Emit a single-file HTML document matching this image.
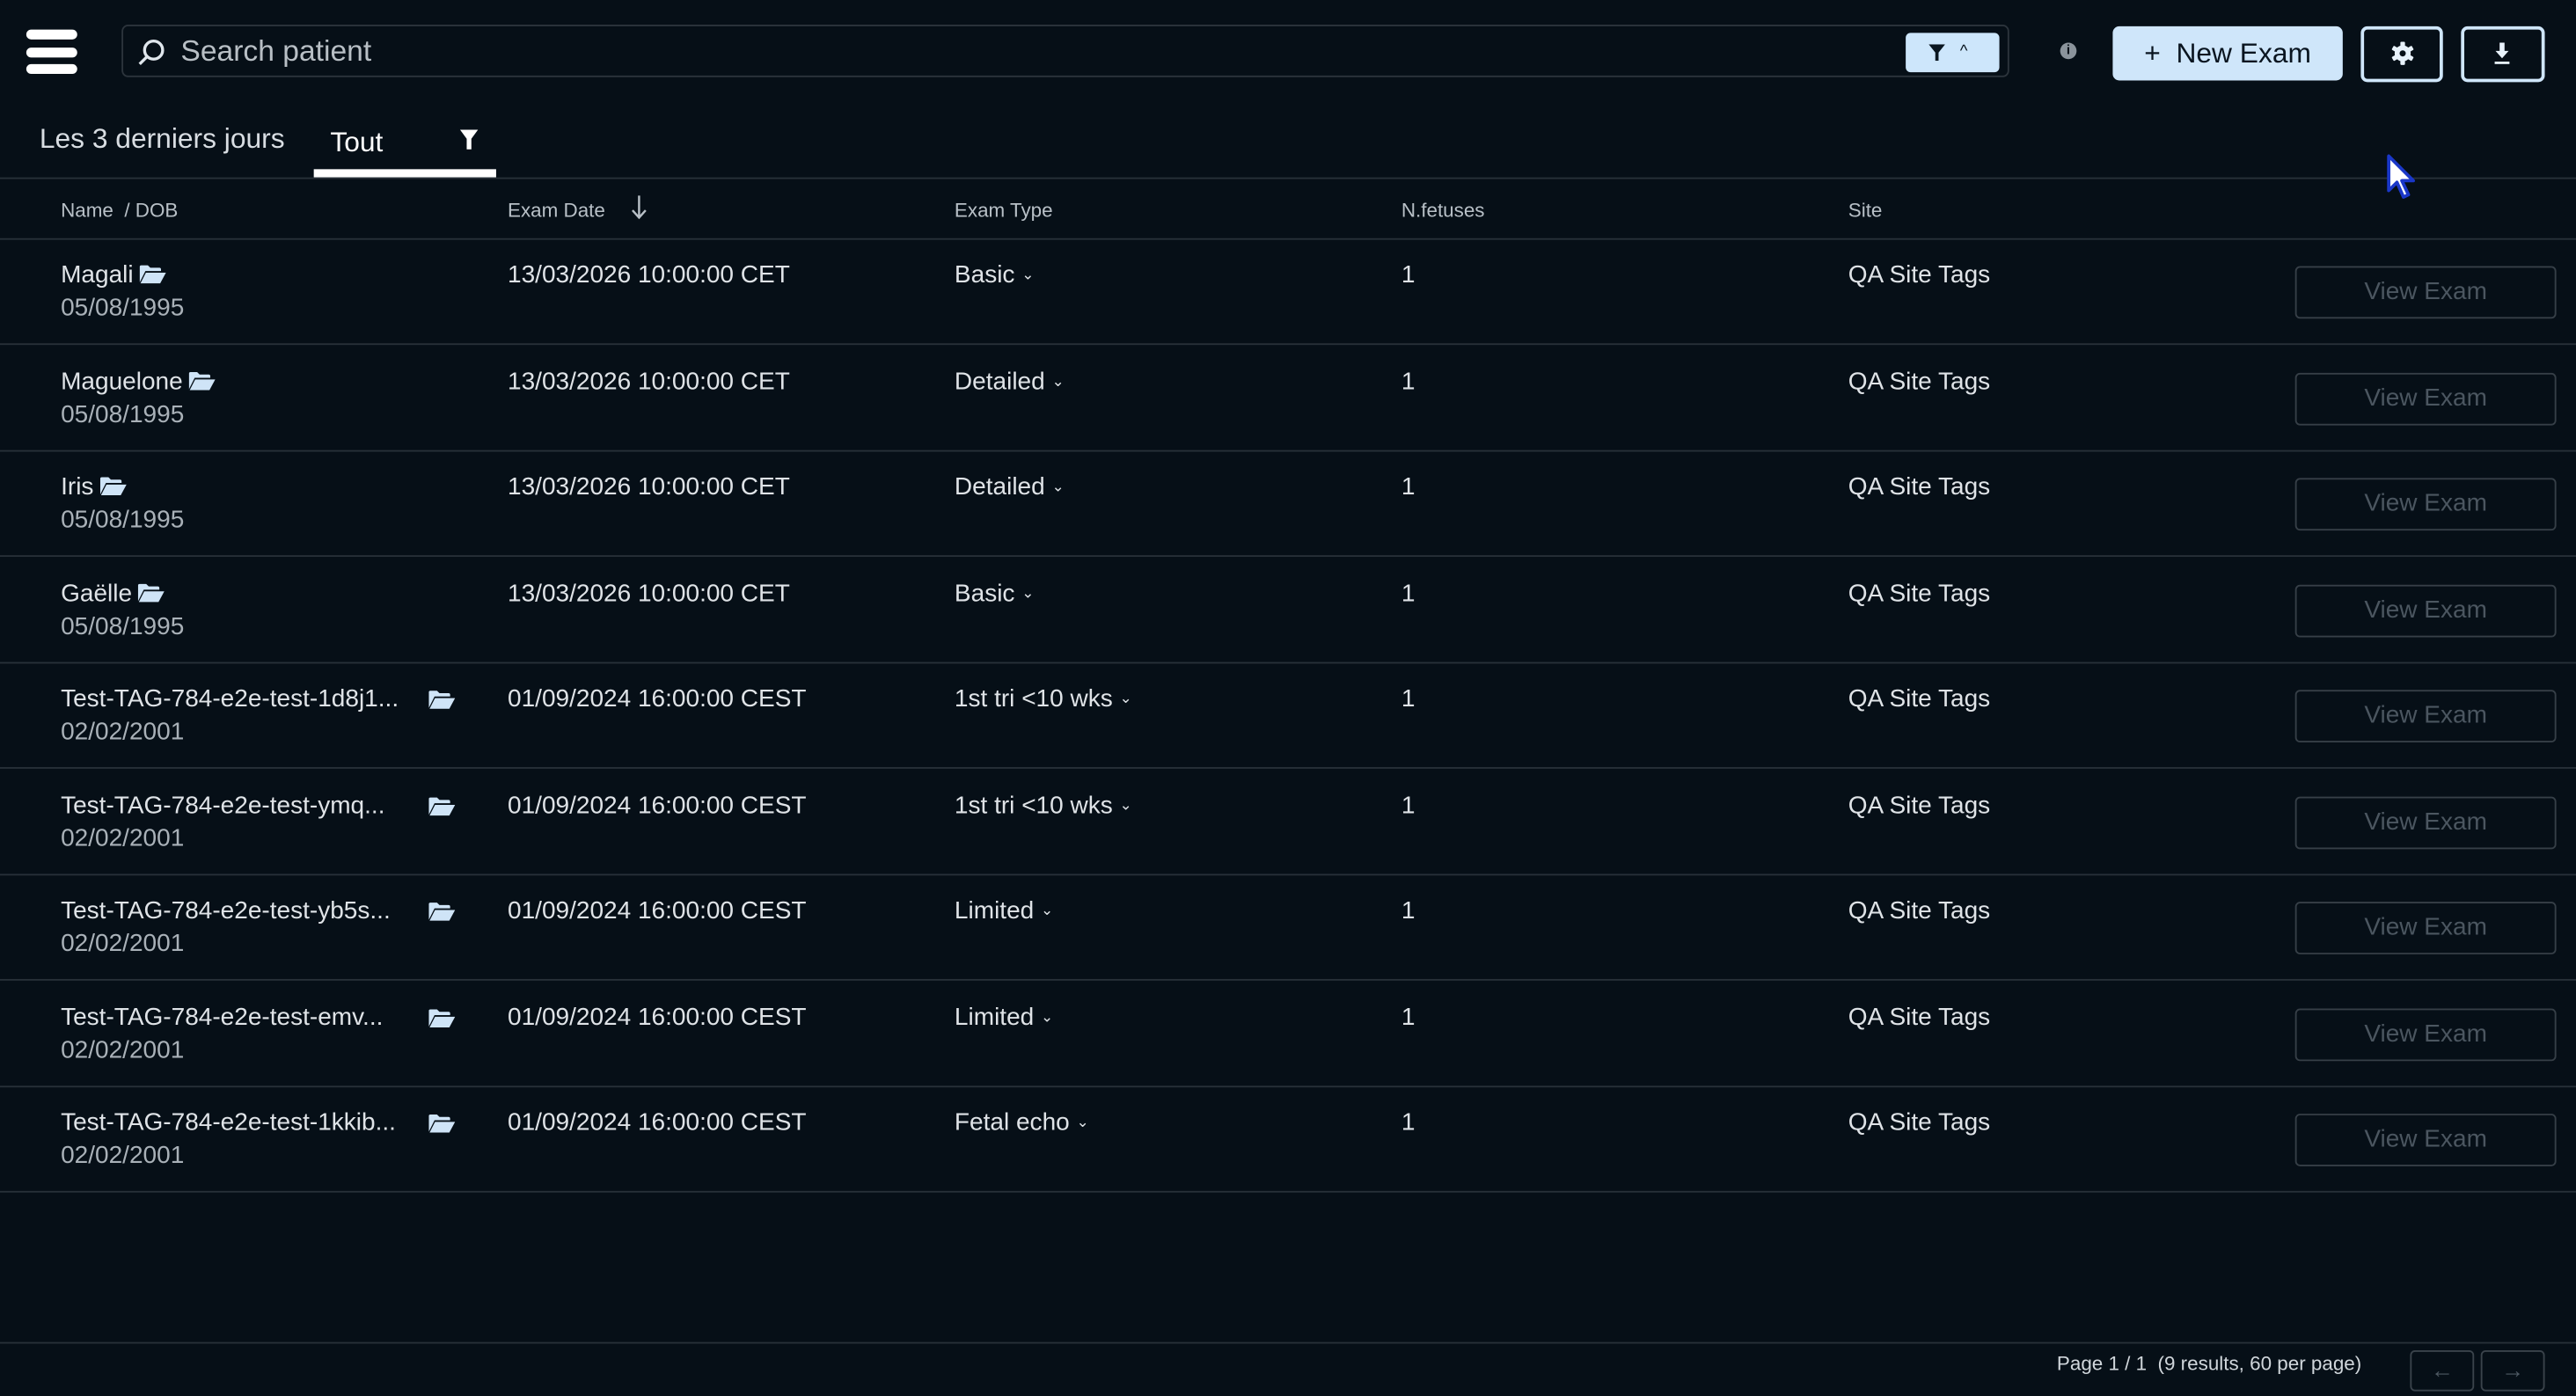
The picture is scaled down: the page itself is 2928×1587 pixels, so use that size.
<!DOCTYPE html>
<html><head><meta charset="utf-8"><style>
html,body{margin:0;padding:0;background:#060f17;overflow:hidden;width:2928px;height:1586px}
#w{position:absolute;left:0;top:0;width:1568px;height:850px;transform:scale(1.86735);transform-origin:0 0;font-family:"Liberation Sans",sans-serif;color:#dde2e6}
.a{position:absolute;white-space:nowrap}
.hl{position:absolute;left:0;width:1568px;height:1px;background:#273038}
.bar{position:absolute;left:16px;width:31px;height:6px;border-radius:3px;background:#fff}
.vb{position:absolute;left:1397px;width:159px;height:32px;border:1.5px solid #363f47;border-radius:3px;box-sizing:border-box;color:#4b5660;font-size:15px;text-align:center;line-height:29px}
.nm{font-size:15px;color:#dfe3e7}
.dob{font-size:15px;color:#a9b1b8}
.c{font-size:15px;color:#dfe3e7}
.fold{display:inline-block;vertical-align:-1px;margin-left:4px}
</style></head><body><div id="w">
<div class="bar" style="top:18px"></div><div class="bar" style="top:29px"></div><div class="bar" style="top:39px"></div>
<div class="a" style="left:74px;top:15px;width:1149px;height:32px;border:1px solid #2c343c;border-radius:4px;box-sizing:border-box"></div>
<svg class="a" style="left:83px;top:23px" width="18" height="18" viewBox="0 0 18 18"><circle cx="10.5" cy="7.5" r="5.5" fill="none" stroke="#dfe6ec" stroke-width="1.8"/><line x1="6.5" y1="11.5" x2="2" y2="16" stroke="#dfe6ec" stroke-width="1.8"/></svg>
<div class="a" style="left:110px;top:21px;font-size:18px;color:#b8bfc5">Search patient</div>
<div class="a" style="left:1160px;top:20px;width:57px;height:24px;background:#cde6fb;border-radius:3px"></div>
<svg class="a" style="left:1174px;top:27px" width="10" height="10" viewBox="0 0 10 10"><path d="M0 0H10L6 5V10H4V5Z" fill="#0a1620"/></svg>
<div class="a" style="left:1193px;top:26px;font-size:10px;color:#0a1620">^</div>
<div class="a" style="left:1254px;top:26px;width:10px;height:10px;border-radius:50%;background:#8a939b;font-size:8px;color:#060f17;text-align:center;line-height:10px;font-weight:bold">i</div>
<div class="a" style="left:1286px;top:16px;width:140px;height:33px;background:#cfe6fa;border-radius:4px;color:#0a1520;font-size:17px;line-height:33px;text-align:center">+&nbsp;&nbsp;New Exam</div>
<div class="a" style="left:1437px;top:16px;width:50px;height:34px;border:2px solid #cfe6fa;border-radius:4px;box-sizing:border-box"></div>
<svg class="a" style="left:1455px;top:25px" width="15" height="15" viewBox="0 0 16 16"><g fill="#e8f2fb"><circle cx="8" cy="8" r="5.2"/><rect x="6.5" y="0.5" width="3" height="15" rx="0.6"/><rect x="6.5" y="0.5" width="3" height="15" rx="0.6" transform="rotate(60 8 8)"/><rect x="6.5" y="0.5" width="3" height="15" rx="0.6" transform="rotate(120 8 8)"/></g><circle cx="8" cy="8" r="2" fill="#060f17"/></svg>
<div class="a" style="left:1498px;top:16px;width:51px;height:34px;border:2px solid #cfe6fa;border-radius:4px;box-sizing:border-box"></div>
<svg class="a" style="left:1517px;top:26px" width="12" height="14" viewBox="0 0 12 14"><path d="M4.5 0H7.5V5H10L6 9.5L2 5H4.5Z" fill="#e8f2fb"/><rect x="1.5" y="11.5" width="9" height="1.5" fill="#e8f2fb"/></svg>
<div class="a" style="left:24px;top:75px;font-size:17px;color:#d8dde2">Les 3 derniers jours</div>
<div class="a" style="left:201px;top:77px;font-size:17px;color:#fff">Tout</div>
<svg class="a" style="left:280px;top:79px" width="11" height="12" viewBox="0 0 10 11"><path d="M0 0H10L6.3 5V11H3.7V5Z" fill="#fff"/></svg>
<div class="a" style="left:191px;top:103px;width:111px;height:5px;background:#fff"></div>
<div class="hl" style="top:108px"></div>
<div class="a" style="left:37px;top:121px;font-size:12px;color:#b8c0c7">Name &nbsp;/ DOB</div>
<div class="a" style="left:309px;top:121px;font-size:12px;color:#b8c0c7">Exam Date</div>
<svg class="a" style="left:384px;top:119px" width="10" height="15" viewBox="0 0 10 15"><path d="M5 0V13M1 9L5 13.5L9 9" fill="none" stroke="#b8c0c7" stroke-width="1.3"/></svg>
<div class="a" style="left:581px;top:121px;font-size:12px;color:#b8c0c7">Exam Type</div>
<div class="a" style="left:853px;top:121px;font-size:12px;color:#b8c0c7">N.fetuses</div>
<div class="a" style="left:1125px;top:121px;font-size:12px;color:#b8c0c7">Site</div>
<div class="hl" style="top:145px"></div>
<div class="hl" style="top:817px"></div>
<div class="a" style="left:1252px;top:823px;font-size:12px;color:#d0d6db">Page 1 / 1 &nbsp;(9 results, 60 per page)</div>
<div class="a" style="left:1467px;top:822px;width:39px;height:25px;border:1.5px solid #3a434b;border-radius:3px;box-sizing:border-box;color:#4d5862;font-size:14px;text-align:center;line-height:22px">←</div>
<div class="a" style="left:1510px;top:822px;width:39px;height:25px;border:1.5px solid #3a434b;border-radius:3px;box-sizing:border-box;color:#4d5862;font-size:14px;text-align:center;line-height:22px">→</div>
<svg class="a" style="left:1452px;top:94px" width="20" height="28" viewBox="0 0 20 28"><path d="M2 1V22L7 17L11 26L14 24.5L10 16H17Z" fill="#fff" stroke="#1a37c8" stroke-width="2" stroke-linejoin="round"/></svg>
<div id="r"></div>
</div>
<script>
var d=[["Magali","05/08/1995","13/03/2026 10:00:00 CET","Basic",0],["Maguelone","05/08/1995","13/03/2026 10:00:00 CET","Detailed",0],["Iris","05/08/1995","13/03/2026 10:00:00 CET","Detailed",0],["Gaëlle","05/08/1995","13/03/2026 10:00:00 CET","Basic",0],["Test-TAG-784-e2e-test-1d8j1...","02/02/2001","01/09/2024 16:00:00 CEST","1st tri &lt;10 wks",1],["Test-TAG-784-e2e-test-ymq...","02/02/2001","01/09/2024 16:00:00 CEST","1st tri &lt;10 wks",1],["Test-TAG-784-e2e-test-yb5s...","02/02/2001","01/09/2024 16:00:00 CEST","Limited",1],["Test-TAG-784-e2e-test-emv...","02/02/2001","01/09/2024 16:00:00 CEST","Limited",1],["Test-TAG-784-e2e-test-1kkib...","02/02/2001","01/09/2024 16:00:00 CEST","Fetal echo",1]];
var f='<svg width="16" height="12" viewBox="0 0 16 12"><path d="M0 1.5Q0 0.5 1 0.5H5L6.5 2H12Q13 2 13 3V4H3.5L0 11Z" fill="#cfe4f7"/><path d="M3.8 5H16L12.5 11.5H0.5Z" fill="#cfe4f7"/></svg>';
var h='';
d.forEach(function(r,i){var t=145+i*64.5;
h+='<div class="a nm" style="left:37px;top:'+(t+14)+'px">'+r[0]+(r[4]?'':'<span class="fold">'+f+'</span>')+'</div>';
if(r[4])h+='<div class="a" style="left:261px;top:'+(t+16)+'px">'+f+'</div>';
h+='<div class="a dob" style="left:37px;top:'+(t+34)+'px">'+r[1]+'</div>';
h+='<div class="a c" style="left:309px;top:'+(t+14)+'px">'+r[2]+'</div>';
h+='<div class="a c" style="left:581px;top:'+(t+14)+'px">'+r[3]+' <span style="font-size:9px;vertical-align:2px">&#8964;</span></div>';
h+='<div class="a c" style="left:853px;top:'+(t+14)+'px">1</div>';
h+='<div class="a c" style="left:1125px;top:'+(t+14)+'px">QA Site Tags</div>';
h+='<div class="vb" style="top:'+(t+17)+'px">View Exam</div>';
h+='<div class="hl" style="top:'+(t+64)+'px"></div>';});
document.getElementById('r').outerHTML=h;
</script>
</body></html>
